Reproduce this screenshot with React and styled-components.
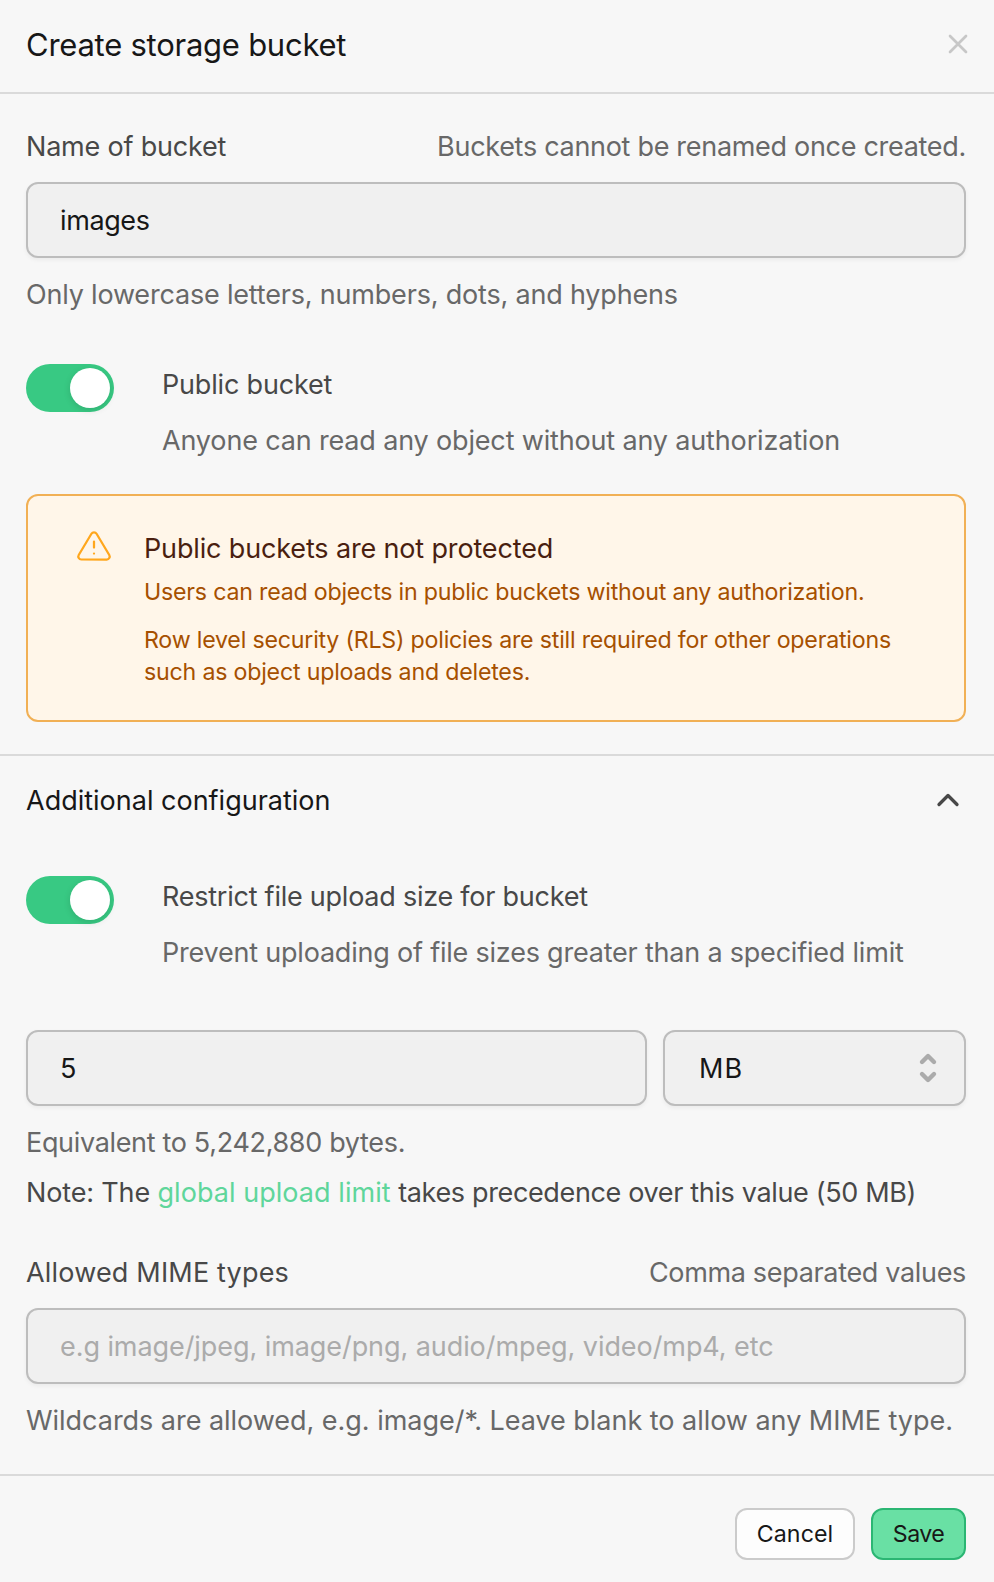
import { useState } from "react";
import styled, { createGlobalStyle } from "styled-components";

export default function App() {
  const [isPublic, setIsPublic] = useState(true);
  const [hasLimit, setHasLimit] = useState(true);

  return (
    <>
      <GlobalStyle />
      <Panel>
        <Header>
          <Title>Create storage bucket</Title>
          <CloseButton aria-label="Close">
            <svg width="32" height="32" viewBox="0 0 24 24">
              <path d="M18 6 6 18M6 6l12 12" />
            </svg>
          </CloseButton>
        </Header>

        <Section>
          <LabelRow>
            <Label $spacing={-0.2}>Name of bucket</Label>
            <Hint $spacing={-0.3}>Buckets cannot be renamed once created.</Hint>
          </LabelRow>
          <Input defaultValue="images" $spacing={-0.4} />
          <Hint $spacing={-0.19}>
            Only lowercase letters, numbers, dots, and hyphens
          </Hint>

          <ToggleRow $top={49}>
            <Switch
              role="switch"
              aria-checked={isPublic}
              $on={isPublic}
              onClick={() => setIsPublic(!isPublic)}
            />
            <ToggleText>
              <Label $spacing={-0.18}>Public bucket</Label>
              <Hint $spacing={-0.16}>
                Anyone can read any object without any authorization
              </Hint>
            </ToggleText>
          </ToggleRow>

          <Alert>
            <svg width="36" height="36" viewBox="0 0 24 24">
              <path d="M10.29 3.86 1.82 18a2 2 0 0 0 1.71 3h16.94a2 2 0 0 0 1.71-3L13.71 3.86a2 2 0 0 0-3.42 0z" />
              <path d="M12 9v4M12 17h.01" />
            </svg>
            <AlertBody>
              <AlertTitle>Public buckets are not protected</AlertTitle>
              <AlertText $spacing={-0.22}>
                Users can read objects in public buckets without any
                authorization.
              </AlertText>
              <AlertText $spacing={-0.21}>
                Row level security (RLS) policies are still required for other
                operations such as object uploads and deletes.
              </AlertText>
            </AlertBody>
          </Alert>
        </Section>

        <Section $divided>
          <Collapse>
            Additional configuration
            <svg width="36" height="36" viewBox="0 0 24 24">
              <path d="m18 15-6-6-6 6" />
            </svg>
          </Collapse>

          <ToggleRow $top={55}>
            <Switch
              role="switch"
              aria-checked={hasLimit}
              $on={hasLimit}
              onClick={() => setHasLimit(!hasLimit)}
            />
            <ToggleText>
              <Label $spacing={-0.24}>Restrict file upload size for bucket</Label>
              <Hint $spacing={-0.21}>
                Prevent uploading of file sizes greater than a specified limit
              </Hint>
            </ToggleText>
          </ToggleRow>

          <LimitRow>
            <Input defaultValue="5" />
            <Select>
              MB
              <svg width="28" height="35" viewBox="0 1 28 35">
                <path d="m8 12 6-6 6 6M8 24l6 6 6-6" />
              </svg>
            </Select>
          </LimitRow>
          <Hint $spacing={-0.33}>Equivalent to 5,242,880 bytes.</Hint>
          <Note>
            Note: The <a href="#limit">global upload limit</a>{" "}
            <span>takes precedence over this value (50 MB)</span>
          </Note>

          <LabelRow>
            <Label $spacing={0.18}>Allowed MIME types</Label>
            <Hint $spacing={-0.33}>Comma separated values</Hint>
          </LabelRow>
          <Input
            placeholder="e.g image/jpeg, image/png, audio/mpeg, video/mp4, etc"
            $spacing={-0.07}
          />
          <Hint $spacing={-0.03}>
            Wildcards are allowed, e.g. image/*. Leave blank to allow any MIME
            type.
          </Hint>
        </Section>

        <Footer>
          <Button $width={120}>Cancel</Button>
          <Button $width={95} $spacing={-0.6} $primary>
            Save
          </Button>
        </Footer>
      </Panel>
    </>
  );
}

const GlobalStyle = createGlobalStyle`
  * {
    box-sizing: border-box;
    margin: 0;
  }

  body {
    background-color: #f7f7f7;
    font-family: Inter, "Liberation Sans", sans-serif;
    font-size: 27px;
    line-height: 41px;
    color: #171717;
  }

  input,
  button {
    font: inherit;
  }

  svg {
    flex-shrink: 0;
    fill: none;
    stroke: currentColor;
    stroke-width: 2;
    stroke-linecap: round;
    stroke-linejoin: round;
  }
`;

const Panel = styled.div`
  display: flex;
  flex-direction: column;
  height: 1582px;
`;

const Header = styled.header`
  display: flex;
  align-items: center;
  justify-content: space-between;
  height: 94px;
  padding: 0 20px 4px 26px;
  border-bottom: 2px solid #dadada;
`;

const Title = styled.h1`
  margin-top: 2px;
  font-size: 31px;
  font-weight: 400;
  line-height: 40px;
  letter-spacing: -0.25px;
`;

const CloseButton = styled.button`
  display: flex;
  padding: 0;
  border: none;
  background: none;
  color: #c7c7c7;
  cursor: pointer;
`;

const Section = styled.section`
  display: flex;
  flex-direction: column;
  padding: ${({ $divided }) => ($divided ? "24px 28px 33px 26px" : "32px 28px 32px 26px")};
  border-top: ${({ $divided }) => ($divided ? "2px solid #dadada" : "none")};
`;

const LabelRow = styled.div`
  display: flex;
  justify-content: space-between;
  margin-bottom: 15px;
`;

const Label = styled.label`
  color: #484848;
  letter-spacing: ${({ $spacing }) => $spacing}px;
`;

const Hint = styled.p`
  color: #686868;
  letter-spacing: ${({ $spacing }) => $spacing}px;
  white-space: nowrap;
`;

const Input = styled.input`
  width: 100%;
  height: 76px;
  margin-bottom: 16px;
  padding: 1px 32px 0;
  border: 2px solid #bdbdbd;
  border-radius: 12px;
  background-color: #f0f0f0;
  box-shadow: 0 2px 4px rgba(0, 0, 0, 0.05);
  color: #171717;
  letter-spacing: ${({ $spacing = 0 }) => $spacing}px;
  outline: none;

  &::placeholder {
    color: #ababab;
    opacity: 1;
  }
`;

const ToggleRow = styled.div`
  display: flex;
  gap: 48px;
  margin-top: ${({ $top }) => $top}px;
`;

const ToggleText = styled.div`
  display: flex;
  flex-direction: column;
  gap: 15px;
`;

const Switch = styled.button`
  display: flex;
  justify-content: ${({ $on }) => ($on ? "flex-end" : "flex-start")};
  width: 88px;
  height: 48px;
  padding: 4px;
  border: none;
  border-radius: 24px;
  background-color: ${({ $on }) => ($on ? "#38c983" : "#c7c7c7")};
  cursor: pointer;

  &::after {
    content: "";
    width: 40px;
    height: 40px;
    border-radius: 50%;
    background-color: #fff;
    box-shadow: 0 2px 7px rgba(0, 0, 0, 0.13);
  }
`;

const Alert = styled.div`
  display: flex;
  gap: 32px;
  margin-top: 33px;
  padding: 32px 48px;
  border: 2px solid #f1b055;
  border-radius: 12px;
  background-color: #fff6e9;
  color: #ffa71d;

  & svg {
    stroke-width: 1.5;
  }
`;

const AlertBody = styled.div`
  display: flex;
  flex-direction: column;
`;

const AlertTitle = styled.h2`
  margin-bottom: 7px;
  font-size: 27px;
  font-weight: 400;
  letter-spacing: -0.15px;
  color: #4a1f10;
`;

const AlertText = styled.p`
  font-size: 23.2px;
  line-height: 32px;
  letter-spacing: ${({ $spacing }) => $spacing}px;
  color: #a65000;

  & + & {
    margin-top: 16px;
  }
`;

const Collapse = styled.button`
  display: flex;
  align-items: flex-start;
  justify-content: space-between;
  padding: 0;
  border: none;
  background: none;
  color: #171717;
  cursor: pointer;

  & svg {
    margin-top: 2px;
    color: #484848;
    stroke-width: 2.2;
  }
`;

const LimitRow = styled.div`
  display: grid;
  grid-template-columns: 621px 303px;
  gap: 16px;
  margin-top: 57px;
`;

const Select = styled.button`
  display: flex;
  align-items: center;
  justify-content: space-between;
  height: 76px;
  padding: 1px 22px 0 34px;
  border: 2px solid #bdbdbd;
  border-radius: 12px;
  background-color: #f0f0f0;
  box-shadow: 0 2px 4px rgba(0, 0, 0, 0.05);
  color: #171717;
  letter-spacing: 1px;

  & svg {
    color: #ababab;
    stroke-width: 4.4;
  }
`;

const Note = styled.p`
  margin: 9px 0 39px;
  color: #484848;
  letter-spacing: -0.15px;
  white-space: nowrap;

  & a {
    color: #5fd69b;
    letter-spacing: 0.05px;
    text-decoration: none;
  }

  & span {
    letter-spacing: -0.35px;
  }
`;

const Footer = styled.footer`
  display: flex;
  justify-content: flex-end;
  gap: 16px;
  padding: 32px 28px 22px 26px;
  border-top: 2px solid #dadada;
`;

const Button = styled.button`
  width: ${({ $width }) => $width}px;
  height: 52px;
  padding: 0;
  border: 2px solid ${({ $primary }) => ($primary ? "#2bb673" : "#cbcbcb")};
  border-radius: 12px;
  background-color: ${({ $primary }) => ($primary ? "#69e0a4" : "#fdfdfd")};
  color: #171717;
  font-size: 23.2px;
  line-height: 40px;
  letter-spacing: ${({ $spacing = 0.1 }) => $spacing}px;
  cursor: pointer;
`;
